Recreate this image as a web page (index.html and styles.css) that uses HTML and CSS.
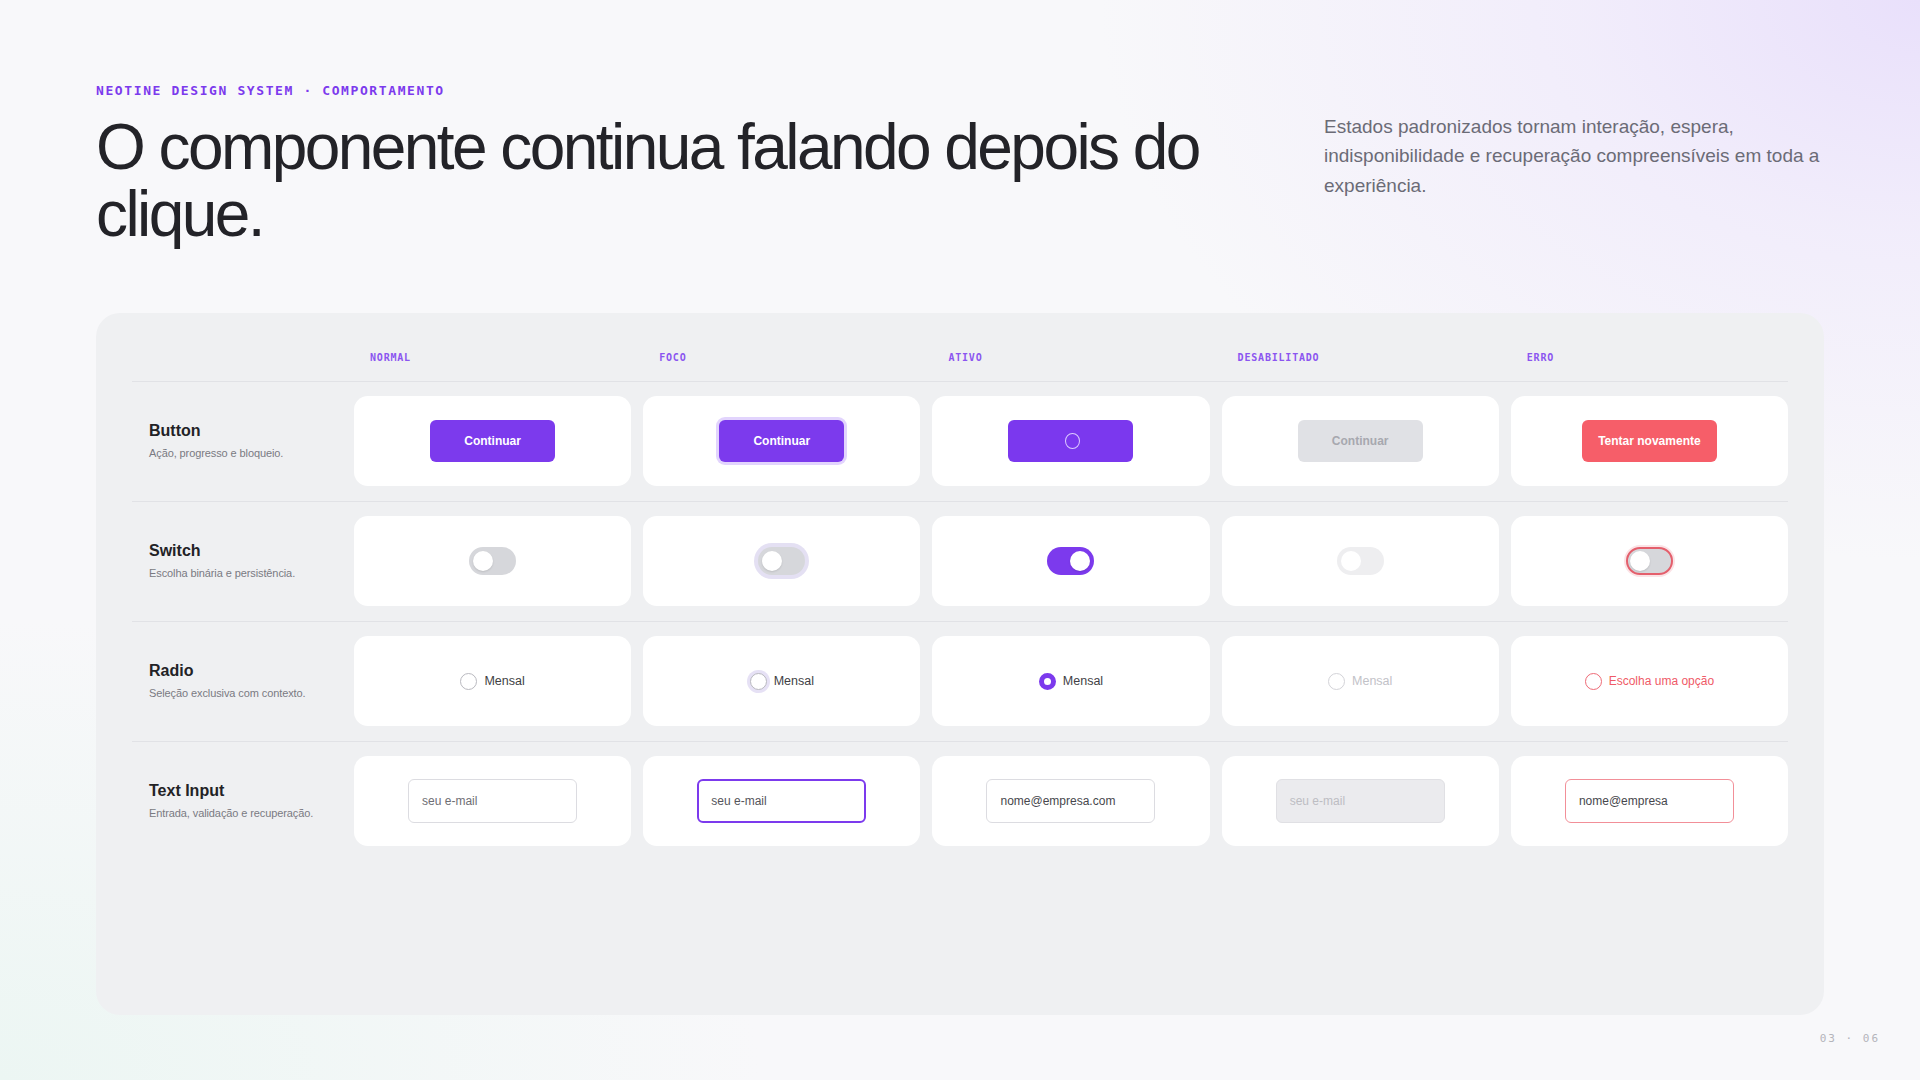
FILE: index.html
```html
<!DOCTYPE html>
<html lang="pt-BR">
<head>
<meta charset="utf-8">
<title>Neotine Design System · Comportamento</title>
<link rel="stylesheet" href="styles.css">
</head>
<body>
<main class="page">
  <header class="head">
    <div class="intro">
      <p class="eyebrow">NEOTINE DESIGN SYSTEM · COMPORTAMENTO</p>
      <h1 class="title">O componente continua falando depois do clique.</h1>
    </div>
    <p class="lede">Estados padronizados tornam interação, espera, indisponibilidade e recuperação compreensíveis em toda a experiência.</p>
  </header>

  <section class="board">
    <div class="grid grid-head">
      <div></div>
      <div class="state">NORMAL</div>
      <div class="state">FOCO</div>
      <div class="state">ATIVO</div>
      <div class="state">DESABILITADO</div>
      <div class="state">ERRO</div>
    </div>

    <div class="grid row">
      <div class="label"><strong>Button</strong><span>Ação, progresso e bloqueio.</span></div>
      <div class="cell"><span class="btn">Continuar</span></div>
      <div class="cell"><span class="btn btn-focus">Continuar</span></div>
      <div class="cell"><span class="btn btn-active"><i class="spinner"></i></span></div>
      <div class="cell"><span class="btn btn-disabled">Continuar</span></div>
      <div class="cell"><span class="btn btn-error">Tentar novamente</span></div>
    </div>

    <div class="grid row">
      <div class="label"><strong>Switch</strong><span>Escolha binária e persistência.</span></div>
      <div class="cell"><span class="switch"></span></div>
      <div class="cell"><span class="switch switch-focus"></span></div>
      <div class="cell"><span class="switch switch-on"></span></div>
      <div class="cell"><span class="switch switch-disabled"></span></div>
      <div class="cell"><span class="switch switch-error"></span></div>
    </div>

    <div class="grid row">
      <div class="label"><strong>Radio</strong><span>Seleção exclusiva com contexto.</span></div>
      <div class="cell"><span class="radio"><i></i>Mensal</span></div>
      <div class="cell"><span class="radio radio-focus"><i></i>Mensal</span></div>
      <div class="cell"><span class="radio radio-on"><i></i>Mensal</span></div>
      <div class="cell"><span class="radio radio-disabled"><i></i>Mensal</span></div>
      <div class="cell"><span class="radio radio-error"><i></i>Escolha uma opção</span></div>
    </div>

    <div class="grid row row-last">
      <div class="label"><strong>Text Input</strong><span>Entrada, validação e recuperação.</span></div>
      <div class="cell"><span class="field field-empty">seu e-mail</span></div>
      <div class="cell"><span class="field field-focus">seu e-mail</span></div>
      <div class="cell"><span class="field">nome@empresa.com</span></div>
      <div class="cell"><span class="field field-disabled">seu e-mail</span></div>
      <div class="cell"><span class="field field-error">nome@empresa</span></div>
    </div>
  </section>

  <footer class="foot">03 · 06</footer>
</main>
</body>
</html>
```

FILE: styles.css
```css
* { box-sizing: border-box; }

html, body {
  margin: 0;
  padding: 0;
}

body {
  font-family: "Liberation Sans", Arial, sans-serif;
  color: #1e1e23;
  background:
    radial-gradient(ellipse 820px 560px at 100% 0%, #e9e0fb 0%, rgba(236, 228, 252, 0.55) 42%, rgba(248, 248, 250, 0) 100%),
    radial-gradient(ellipse 760px 460px at 0% 100%, #ecf6f3 0%, rgba(248, 248, 250, 0) 100%),
    #f8f8fa;
}

.page {
  width: 1920px;
  height: 1080px;
  padding: 81px 96px 0;
  display: flex;
  flex-direction: column;
}

/* ---------- heading ---------- */
.head {
  display: flex;
  justify-content: space-between;
  align-items: flex-start;
}

.intro {
  width: 1150px;
}

.eyebrow {
  margin: 0;
  font-family: "DejaVu Sans Mono", "Liberation Mono", monospace;
  font-weight: 700;
  font-size: 13px;
  line-height: 20px;
  letter-spacing: 1.6px;
  color: #7c3aed;
}

.title {
  margin: 13px 0 0;
  font-weight: 400;
  font-size: 64px;
  line-height: 67px;
  letter-spacing: -0.04em;
  color: #232328;
}

.lede {
  margin: 31px 0 0;
  width: 500px;
  font-size: 19px;
  line-height: 1.55;
  color: #6b6b76;
}

/* ---------- board ---------- */
.board {
  margin-top: 65px;
  height: 702px;
  background: #eff0f2;
  border-radius: 24px;
  padding: 0 36px;
}

.grid {
  display: grid;
  grid-template-columns: 210px repeat(5, 1fr);
  column-gap: 12px;
}

.grid-head {
  padding: 36px 0 14px;
  border-bottom: 1px solid #e1e2e6;
}

.state {
  padding-left: 16px;
  font-family: "DejaVu Sans Mono", "Liberation Mono", monospace;
  font-weight: 700;
  font-size: 10px;
  line-height: 18px;
  letter-spacing: 0.8px;
  color: #8b55f0;
}

.row {
  padding: 14px 0 15px;
  border-bottom: 1px solid #e1e2e6;
}

.row-last {
  border-bottom: 0;
}

.label {
  display: flex;
  flex-direction: column;
  justify-content: center;
  padding-left: 17px;
}

.label strong {
  font-size: 16px;
  line-height: 18px;
  font-weight: 700;
  color: #222226;
}

.label span {
  margin-top: 6px;
  font-size: 11px;
  line-height: 14px;
  color: #7a7a82;
  letter-spacing: -0.1px;
}

.cell {
  height: 90px;
  background: #fff;
  border-radius: 14px;
  display: flex;
  align-items: center;
  justify-content: center;
}

/* ---------- buttons ---------- */
.btn {
  min-width: 125px;
  height: 42px;
  padding: 0 16px;
  border-radius: 6px;
  background: #7c3aed;
  color: #fff;
  font-size: 12px;
  font-weight: 700;
  display: inline-flex;
  align-items: center;
  justify-content: center;
}

.btn-focus {
  box-shadow: 0 0 0 3px #e2d4fd;
}

.btn-active {
  background: #7b38ee;
}

.spinner {
  width: 15px;
  height: 16px;
  margin-left: 3px;
  border-radius: 50%;
  border: 1.5px solid #dccbff;
}

.btn-disabled {
  background: #e0e1e5;
  color: #a7a8af;
}

.btn-error {
  background: #f65e69;
}

/* ---------- switches ---------- */
.switch {
  position: relative;
  width: 47px;
  height: 28px;
  border-radius: 14px;
  background: #d6d7db;
}

.switch::after {
  content: "";
  position: absolute;
  top: 4px;
  left: 4px;
  width: 20px;
  height: 20px;
  border-radius: 50%;
  background: #fff;
  box-shadow: 0 1px 2px rgba(0, 0, 0, 0.12);
}

.switch-focus {
  box-shadow: 0 0 0 4px #e4e0f3;
}

.switch-on {
  background: #7c3aed;
}

.switch-on::after {
  left: 23px;
}

.switch-disabled {
  background: #eeeef0;
}

.switch-disabled::after {
  box-shadow: none;
}

.switch-error {
  border: 2px solid #e45f6c;
  box-shadow: 0 0 0 2px #fbe3e6;
}

.switch-error::after {
  top: 2px;
  left: 2px;
}

/* ---------- radios ---------- */
.radio {
  display: inline-flex;
  align-items: center;
  gap: 7px;
  font-size: 12.5px;
  color: #3f3f45;
}

.radio i {
  width: 17px;
  height: 17px;
  border-radius: 50%;
  border: 1.5px solid #b9b9bf;
  background: #fff;
}

.radio-focus i {
  box-shadow: 0 0 0 3px #e6e1f5;
}

.radio-on i {
  border: 5px solid #7c3aed;
}

.radio-disabled {
  color: #c2c2c8;
}

.radio-disabled i {
  border-color: #d3d3d8;
}

.radio-error {
  color: #ef5a67;
  font-size: 12px;
}

.radio-error i {
  border-color: #ee6a76;
}

/* ---------- text fields ---------- */
.field {
  width: 169px;
  height: 44px;
  padding: 0 13px;
  border: 1px solid #dcdce1;
  border-radius: 6px;
  background: #fff;
  font-size: 12px;
  color: #47474d;
  display: flex;
  align-items: center;
}

.field-empty {
  color: #6e6e74;
}

.field-focus {
  border: 2px solid #7c3aed;
  padding-left: 12px;
  color: #55555b;
}

.field-disabled {
  background: #ebebee;
  border-color: #e0e0e4;
  color: #bdbdc3;
}

.field-error {
  border-color: #f28f98;
}

/* ---------- footer ---------- */
.foot {
  align-self: flex-end;
  margin: 16px -56px 0 0;
  font-family: "DejaVu Sans Mono", "Liberation Mono", monospace;
  font-size: 11px;
  line-height: 16px;
  letter-spacing: 2px;
  color: #b4b4ba;
}
```
